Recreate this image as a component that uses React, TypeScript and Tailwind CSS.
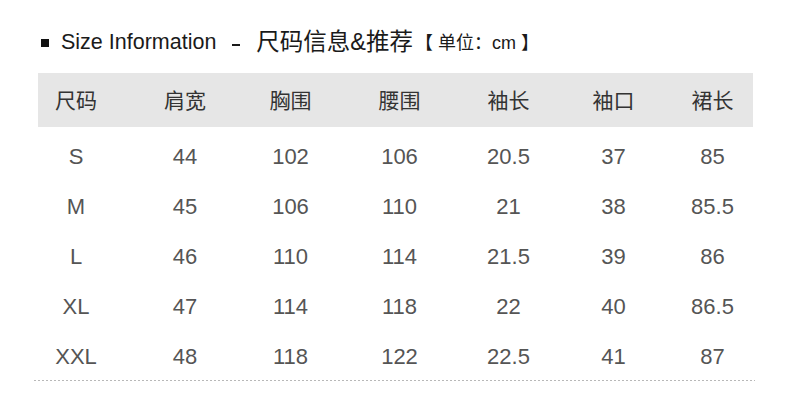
import React from "react";

const headers = ["尺码", "肩宽", "胸围", "腰围", "袖长", "袖口", "裙长"];
const rows = [
  ["S", "44", "102", "106", "20.5", "37", "85"],
  ["M", "45", "106", "110", "21", "38", "85.5"],
  ["L", "46", "110", "114", "21.5", "39", "86"],
  ["XL", "47", "114", "118", "22", "40", "86.5"],
  ["XXL", "48", "118", "122", "22.5", "41", "87"],
];

const font = { fontFamily: '"Liberation Sans", "Noto Sans CJK SC", sans-serif' };

export default function App() {
  return (
    <div className="w-[790px] h-[411px] bg-white overflow-hidden" style={font}>
      <div className="h-[73px] pt-[13px] flex items-center pl-[41px] text-[#1a1a1a]">
        <span className="w-[8px] h-[8px] bg-[#111]" />
        <span className="ml-[12px] text-[21.5px] leading-none">Size Information</span>
        <span className="ml-[16px] w-[8px] h-[2px] bg-[#1a1a1a] mt-[4px]" />
        <span className="ml-[16px] text-[23.5px] leading-none">尺码信息&amp;推荐</span>
        <span className="ml-[2px] text-[18px] leading-none">【 单位：cm 】</span>
      </div>
      <div className="ml-[38px] w-[715px]">
        <div className="h-[54px] bg-[#e6e6e6] grid grid-cols-[76px_142px_69px_149px_69px_141px_57px] items-center text-[21px] text-[#333]">
          {headers.map((h) => (
            <div key={h} className="text-center leading-none">
              {h}
            </div>
          ))}
        </div>
        <div className="mt-[5px]">
          {rows.map((r) => (
            <div
              key={r[0]}
              className="h-[50px] grid grid-cols-[76px_142px_69px_149px_69px_141px_57px] items-center text-[22px] text-[#555]"
            >
              {r.map((c, i) => (
                <div key={i} className="text-center leading-none">
                  {c}
                </div>
              ))}
            </div>
          ))}
        </div>
      </div>
      <div className="-mt-[2px] ml-[34px] w-[721px] h-px bg-[linear-gradient(to_right,#b8b8b8_50%,transparent_50%)] bg-[length:4px_1px]" />
    </div>
  );
}
